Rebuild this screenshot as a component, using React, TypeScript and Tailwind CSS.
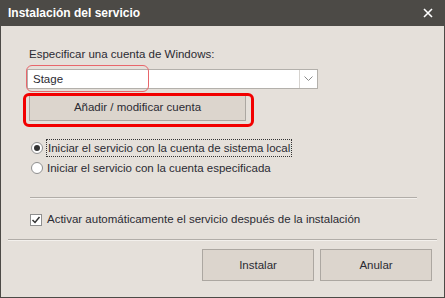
import React from "react";

const font = { fontFamily: '"Liberation Sans", Arial, sans-serif' };

function Radio({ checked }: { checked?: boolean }) {
  return (
    <span className="w-[12px] h-[12px] rounded-full border border-[#8f8f8f] bg-white flex items-center justify-center shrink-0">
      {checked && <span className="w-[6px] h-[6px] rounded-full bg-[#333]" />}
    </span>
  );
}

export default function App() {
  return (
    <div className="w-[445px] h-[298px] bg-[#4c4a46] flex flex-col text-[11.5px] text-[#2b2b33]" style={font}>
      {/* title bar */}
      <div className="h-[26px] flex items-center justify-between pl-[8px] pr-[12px] text-white">
        <span className="font-bold text-[12px]">Instalación del servicio</span>
        <svg width="10" height="10" viewBox="0 0 10 10">
          <path d="M1 1 L9 9 M9 1 L1 9" stroke="#fff" strokeWidth="1.6" />
        </svg>
      </div>

      {/* body */}
      <div className="relative flex-1 mx-[1px] mb-[1px] bg-[#e5e0da] flex flex-col">
        <div className="pl-[28px] pt-[21px] leading-[14px]">Especificar una cuenta de Windows:</div>

        {/* combo */}
        <div className="ml-[26px] mt-[8px] w-[291px] h-[20px] border border-[#b3b0ab] bg-white flex">
          <span className="flex-1 pl-[5px] leading-[18px]">Stage</span>
          <span className="w-[18px] border-l border-[#d6d3cf] flex items-center justify-center">
            <svg width="9" height="6" viewBox="0 0 9 6">
              <path d="M0.5 0.5 L4.5 4.5 L8.5 0.5" stroke="#8a8a8a" fill="none" strokeWidth="1" />
            </svg>
          </span>
        </div>

        {/* button */}
        <div className="ml-[28px] mt-[6px] w-[217px] h-[26px] border border-[#aca7a1] bg-[#dcd5cd] flex items-center justify-center">
          Añadir / modificar cuenta
        </div>

        {/* radios */}
        <div className="mt-[20px] ml-[30px] flex flex-col gap-[6px]">
          <div className="flex items-center gap-[3px] h-[14px]">
            <Radio checked />
            <span className="border border-dotted border-[#333] px-[1px] leading-[16px]">
              Iniciar el servicio con la cuenta de sistema local
            </span>
          </div>
          <div className="flex items-center gap-[4px] h-[14px]">
            <Radio />
            <span className="leading-[16px]">Iniciar el servicio con la cuenta especificada</span>
          </div>
        </div>

        <div className="mt-[22px] ml-[29px] mr-[27px] h-[2px] border-t border-[#b1ada8] border-b border-b-[#f3f0ec]" />

        <div className="mt-[12px] ml-[29px] flex items-center gap-[5px]">
          <span className="w-[12px] h-[12px] border border-[#8f8f8f] bg-white flex items-center justify-center">
            <svg width="10" height="10" viewBox="0 0 10 10">
              <path d="M1.5 5 L4 7.5 L8.5 2" stroke="#333" fill="none" strokeWidth="1.5" />
            </svg>
          </span>
          <span>Activar automáticamente el servicio después de la instalación</span>
        </div>

        <div className="mt-[11px] mx-[7px] h-[2px] border-t border-[#b1ada8] border-b border-b-[#f3f0ec]" />

        <div className="mt-[8px] pr-[12px] flex justify-end gap-[6px]">
          <div className="w-[112px] h-[32px] border border-[#aca7a1] bg-[#dcd5cd] flex items-center justify-center">
            Instalar
          </div>
          <div className="w-[112px] h-[32px] border border-[#aca7a1] bg-[#dcd5cd] flex items-center justify-center">
            Anular
          </div>
        </div>

        {/* annotations */}
        <div className="absolute left-[25px] top-[39px] w-[123px] h-[27px] border-[1.5px] border-[#e8666b] rounded-[6px]" />
        <div className="absolute left-[22px] top-[67px] w-[231px] h-[34px] border-[3px] border-[#f20000] rounded-[6px]" />
      </div>
    </div>
  );
}
